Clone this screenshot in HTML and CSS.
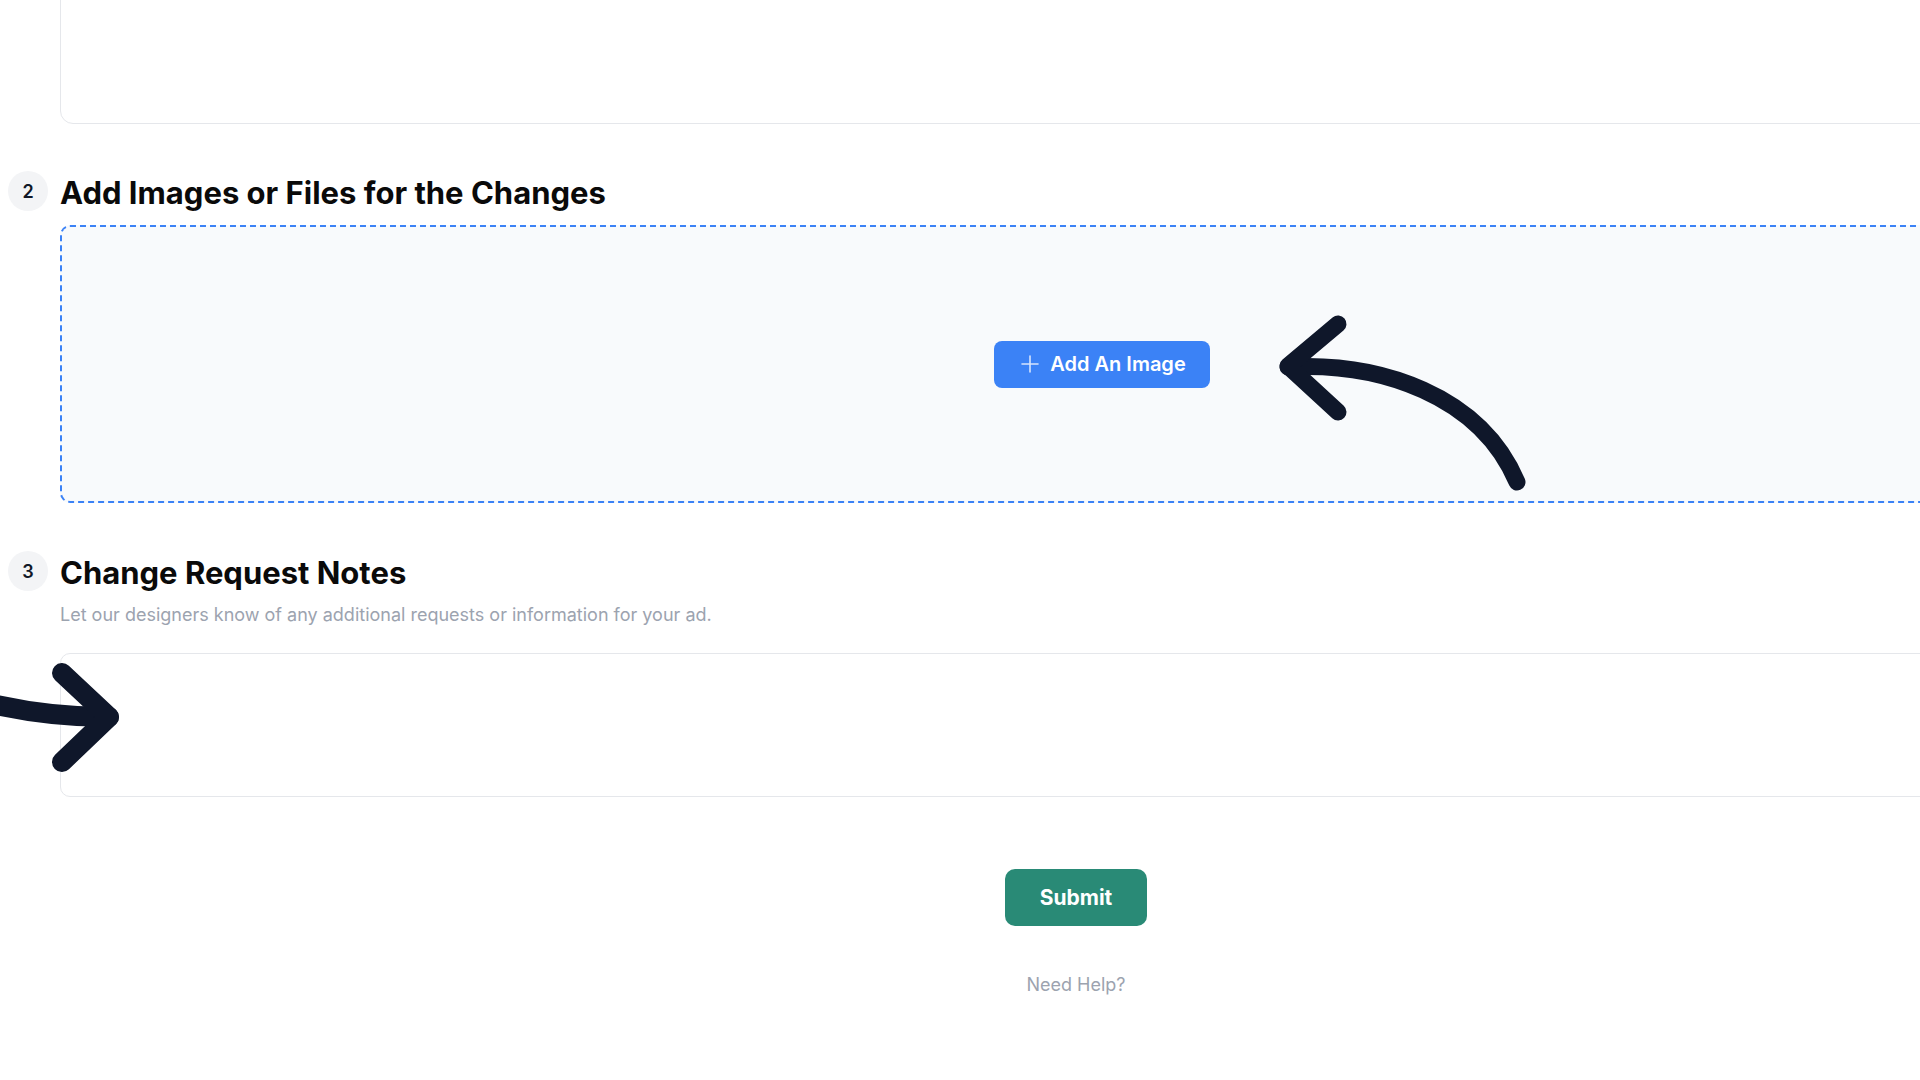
FILE: index.html
```html
<!DOCTYPE html>
<html lang="en">

<head>
  <meta charset="UTF-8">
  <meta name="viewport" content="width=device-width, initial-scale=1.0">
  <title>Change Request</title>
  <link rel="stylesheet" href="styles.css">
</head>

<body>

  <div class="page">
    <div class="field-box top-box"></div>

    <section class="step-section step-files">
      <div class="step-head">
        <span class="step-num">2</span>
        <h2>Add Images or Files for the Changes</h2>
      </div>
      <div class="dropzone">
        <button class="add-btn" type="button">
          <svg class="plus" width="18" height="18" viewBox="0 0 18 18" fill="none">
            <path d="M9 1v16M1 9h16" stroke="currentColor" stroke-width="1.6" stroke-linecap="round" />
          </svg>
          <span>Add An Image</span>
        </button>
      </div>
    </section>

    <section class="step-section step-notes">
      <div class="step-head">
        <span class="step-num">3</span>
        <h2>Change Request Notes</h2>
      </div>
      <p class="hint">Let our designers know of any additional requests or information for your ad.</p>
      <div class="field-box notes"></div>
    </section>

    <div class="actions">
      <button class="submit-btn" type="submit">Submit</button>
      <a class="help-link" href="#">Need Help?</a>
    </div>
  </div>

  <!-- hand-drawn arrows on top of the form -->
  <svg class="arrows" width="1920" height="1080" viewBox="0 0 1920 1080" fill="none">
    <g stroke="#0f172a" stroke-linecap="round" stroke-linejoin="round">
      <path d="M1288 367 C1380 362 1480 395 1517 482" stroke-width="17" />
      <path d="M1338 324 L1288 366 L1338 412" stroke-width="17" />
      <path d="M-12 703 C30 713 68 717 109 717" stroke-width="20" />
      <path d="M62 673 L109 717 L62 762" stroke-width="20" />
    </g>
  </svg>

</body>

</html>
```

FILE: styles.css
```css
body {
  margin: 0;
  overflow: hidden;
  background-color: #ffffff;
  font-family: Inter, "Noto Sans", sans-serif;
  color: #111111;
}

.page {
  width: 2136px;
  margin-top: -56px;
  padding-left: 8px;
  display: flex;
  flex-direction: column;
}

.field-box {
  box-sizing: border-box;
  margin-left: 52px;
  border: 1px solid #e5e7eb;
  background-color: #ffffff;
}

.top-box {
  height: 180px;
  border-radius: 13px;
}

.step-section {
  display: flex;
  flex-direction: column;
}

.step-files {
  margin-top: 47px;
}

.step-notes {
  margin-top: 48px;
}

.step-head {
  display: flex;
  align-items: flex-start;
  gap: 12px;
}

.step-num {
  width: 40px;
  height: 40px;
  border-radius: 50%;
  background-color: #f3f4f6;
  display: flex;
  align-items: center;
  justify-content: center;
  font-size: 18px;
  font-weight: 600;
  color: #111827;
}

h2 {
  margin: 0;
  padding-top: 2px;
  font-size: 31px;
  line-height: 40px;
  font-weight: 700;
  color: #0a0a0a;
}

.dropzone {
  box-sizing: border-box;
  height: 278px;
  margin: 12px 0 0 52px;
  border: 2px dashed #3b82f6;
  border-radius: 10px;
  background-color: #f8fafc;
  display: flex;
  align-items: center;
  justify-content: center;
}

.add-btn {
  height: 47px;
  padding: 0 24px 0 27px;
  display: flex;
  align-items: center;
  gap: 11px;
  border: none;
  border-radius: 8px;
  background-color: #3b82f6;
  color: #ffffff;
  font-family: inherit;
  font-size: 20px;
  font-weight: 600;
  cursor: pointer;
}

.add-btn .plus {
  color: #d6e4fd;
}

.hint {
  margin: 8px 0 0 52px;
  font-size: 18px;
  line-height: 28px;
  color: #9ca3af;
}

.notes {
  height: 144px;
  margin-top: 24px;
  border-radius: 10px;
}

.actions {
  margin-top: 72px;
  display: flex;
  flex-direction: column;
  align-items: center;
}

.submit-btn {
  height: 57px;
  padding: 0 35px;
  border: none;
  border-radius: 10px;
  background-color: #298a76;
  color: #ffffff;
  font-family: inherit;
  font-size: 21px;
  font-weight: 700;
  cursor: pointer;
}

.help-link {
  margin-top: 45px;
  font-size: 18px;
  line-height: 28px;
  color: #9ca3af;
  text-decoration: none;
}

.arrows {
  position: absolute;
  top: 0;
  left: 0;
  pointer-events: none;
}
```
